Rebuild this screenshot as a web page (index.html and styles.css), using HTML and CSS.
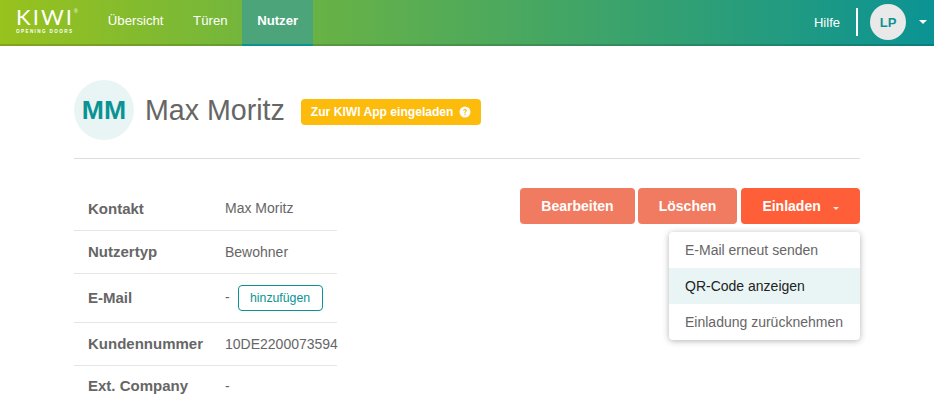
FILE: index.html
```html
<!DOCTYPE html>
<html lang="de">
<head>
  <meta charset="UTF-8" />
  <meta name="viewport" content="width=device-width, initial-scale=1" />
  <title>KIWI - Nutzer</title>
  <link rel="stylesheet" href="styles.css">
</head>
<body>
  <header class="top-bar">
    <a class="logo" href="#">
      <svg class="logo-svg" viewBox="0 0 66 44" aria-label="KIWI Opening Doors">
        <text class="logo-word" x="0" y="25" textLength="56">KIWI</text>
        <text class="logo-reg" x="58" y="13">®</text>
        <text class="logo-claim" x="0" y="32.5" textLength="56">OPENING DOORS</text>
      </svg>
    </a>
    <nav class="main-nav" aria-label="Hauptnavigation">
      <a href="#">Übersicht</a>
      <a href="#">Türen</a>
      <a href="#" class="active" aria-current="page">Nutzer</a>
    </nav>
    <div class="top-right">
      <a class="help-link" href="#">Hilfe</a>
      <span class="top-sep"></span>
      <span class="user-badge">LP</span>
      <span class="caret caret-white"></span>
    </div>
  </header>

  <main class="page">
    <section class="user-head">
      <span class="avatar">MM</span>
      <h1 class="user-name">Max Moritz</h1>
      <button class="invite-badge">
        Zur KIWI App eingeladen
        <svg class="help-icon" viewBox="0 0 12 12" aria-hidden="true">
          <circle cx="6" cy="6" r="5.5" fill="#fff"/>
          <path d="M4.1 4.7 C4.2 3.5 5 3 6 3 C7.1 3 7.9 3.6 7.9 4.6 C7.9 5.7 6.6 5.8 6.6 6.9 H5.4 C5.4 5.4 6.6 5.4 6.6 4.7 C6.6 4.3 6.4 4.1 6 4.1 C5.6 4.1 5.4 4.4 5.3 4.8 Z" fill="#fdbb0c"/>
          <rect x="5.35" y="7.6" width="1.3" height="1.3" fill="#fdbb0c"/>
        </svg>
      </button>
    </section>

    <section class="user-body">
      <table class="info-table">
        <tr><th>Kontakt</th><td>Max Moritz</td></tr>
        <tr><th>Nutzertyp</th><td>Bewohner</td></tr>
        <tr class="row-email"><th>E-Mail</th><td>- <button class="add-btn">hinzufügen</button></td></tr>
        <tr><th>Kundennummer</th><td>10DE2200073594</td></tr>
        <tr><th>Ext. Company</th><td>-</td></tr>
      </table>

      <div class="actions">
        <button class="btn btn-light btn-edit">Bearbeiten</button>
        <button class="btn btn-light btn-delete">Löschen</button>
        <div class="dropdown">
          <button class="btn btn-strong btn-invite">Einladen <span class="caret"></span></button>
          <ul class="dropdown-menu">
            <li>E-Mail erneut senden</li>
            <li class="hover">QR-Code anzeigen</li>
            <li>Einladung zurücknehmen</li>
          </ul>
        </div>
      </div>
    </section>
  </main>
</body>
</html>
```

FILE: styles.css
```css
html, body {
  height: 100%;
}
body {
  margin: 0;
  padding: 0;
  overflow: hidden;
  font-family: "Liberation Sans", Arial, sans-serif;
  font-size: 14px;
  color: #666;
  background: #fff;
}
button {
  font-family: inherit;
}

/* Top bar */
.top-bar {
  display: flex;
  align-items: stretch;
  height: 44px;
  background: linear-gradient(90deg, #98c21d 0%, #0b9394 100%);
  border-bottom: 2px solid rgba(0,0,0,0.14);
}
.logo {
  display: block;
  width: 93px;
  padding-left: 16px;
  box-sizing: border-box;
  text-decoration: none;
}
.logo-svg {
  display: block;
  width: 66px;
  height: 44px;
  fill: #fff;
}
.logo-word {
  font-family: "Lato", sans-serif;
  font-size: 22px;
}
.logo-reg {
  font-size: 5px;
}
.logo-claim {
  font-size: 4.6px;
  font-weight: 700;
}
.main-nav {
  display: flex;
  height: 46px;
}
.main-nav a {
  padding: 0 14.8px;
  line-height: 42px;
  font-size: 13.2px;
  color: #fff;
  text-decoration: none;
}
.main-nav a.active {
  font-weight: 700;
  background: #4ba47a;
  border-bottom: 2px solid #0b9394;
  height: 44px;
}
.top-right {
  display: flex;
  align-items: center;
  margin-left: auto;
  padding-right: 7px;
}
.help-link {
  color: #fff;
  font-size: 13px;
  text-decoration: none;
}
.top-sep {
  width: 2px;
  height: 28px;
  margin: 0 12px 0 16px;
  background: #fff;
}
.user-badge {
  display: flex;
  align-items: center;
  justify-content: center;
  width: 36px;
  height: 36px;
  border-radius: 50%;
  background: #e9e9e9;
  color: #0b9394;
  font-size: 13px;
  font-weight: 700;
}
.caret {
  display: inline-block;
  width: 0;
  height: 0;
  border-left: 4px solid transparent;
  border-right: 4px solid transparent;
  border-top: 4px solid #fff;
}
.caret-white {
  margin-left: 13px;
}

/* Page */
.page {
  margin: 0 74px;
}
.user-head {
  display: flex;
  align-items: center;
  box-sizing: border-box;
  height: 113px;
  padding-top: 34px;
  padding-bottom: 18px;
  border-bottom: 1px solid #ddd;
}
.avatar {
  display: flex;
  align-items: center;
  justify-content: center;
  width: 60px;
  height: 60px;
  border-radius: 50%;
  background: #e9f5f5;
  color: #0b9394;
  font-size: 26.6px;
  font-weight: 700;
}
.user-name {
  margin: 0 16px 0 11px;
  font-size: 28.6px;
  font-weight: 400;
  color: #666;
}
.invite-badge {
  display: flex;
  align-items: center;
  height: 26px;
  margin-top: 4px;
  padding: 0 10px;
  border: none;
  border-radius: 4px;
  background: #fdbb0c;
  color: #fff;
  font-size: 12.1px;
  font-weight: 700;
}
.help-icon {
  width: 12px;
  height: 12px;
  margin-left: 6px;
}

.user-body {
  display: flex;
  justify-content: space-between;
  align-items: flex-start;
  padding-top: 29px;
}

/* Info table */
.info-table {
  table-layout: fixed;
  width: 263px;
  margin-top: -1px;
  border-collapse: collapse;
}
.info-table th,
.info-table td {
  box-sizing: border-box;
  height: 43px;
  padding: 0;
  border-bottom: 1px solid #e6e6e6;
  text-align: left;
  white-space: nowrap;
}
.info-table th {
  width: 151px;
  padding-left: 14px;
  font-size: 15px;
  font-weight: 700;
  color: #666;
}
.info-table td {
  font-size: 14px;
}
.info-table tr:last-child th,
.info-table tr:last-child td {
  height: 41px;
  border-bottom: none;
}
.row-email th,
.row-email td {
  height: 49px;
}
.add-btn {
  width: 85px;
  height: 26px;
  margin-left: 4px;
  padding: 0;
  border: 1px solid #0b9394;
  border-radius: 4px;
  background: #fff;
  color: #0b9394;
  font-size: 12.3px;
}

/* Action buttons */
.actions {
  display: flex;
  gap: 3px;
}
.btn {
  height: 36px;
  border: none;
  border-radius: 4px;
  color: #fff;
  font-size: 14px;
  font-weight: 700;
}
.btn-light {
  background: #f07b60;
}
.btn-strong {
  background: #ff5f38;
}
.btn-edit {
  width: 115px;
}
.btn-delete {
  width: 99px;
}
.btn-invite {
  width: 119px;
  margin-left: 1px;
}
.btn-invite .caret {
  margin-left: 8px;
  vertical-align: 1px;
  border-left-width: 3.5px;
  border-right-width: 3.5px;
  border-top-width: 3.5px;
  border-top-color: rgba(255,255,255,0.85);
}
.dropdown {
  position: relative;
}
.dropdown-menu {
  position: absolute;
  top: 44px;
  right: 0;
  width: 191px;
  margin: 0;
  padding: 0;
  list-style: none;
  background: #fff;
  border-radius: 4px;
  box-shadow: 0 1px 6px rgba(0,0,0,0.3);
  overflow: hidden;
}
.dropdown-menu li {
  height: 36px;
  padding-left: 16px;
  line-height: 36px;
  font-size: 14px;
  white-space: nowrap;
}
.dropdown-menu li.hover {
  background: #e9f5f5;
  color: #222;
}
```
